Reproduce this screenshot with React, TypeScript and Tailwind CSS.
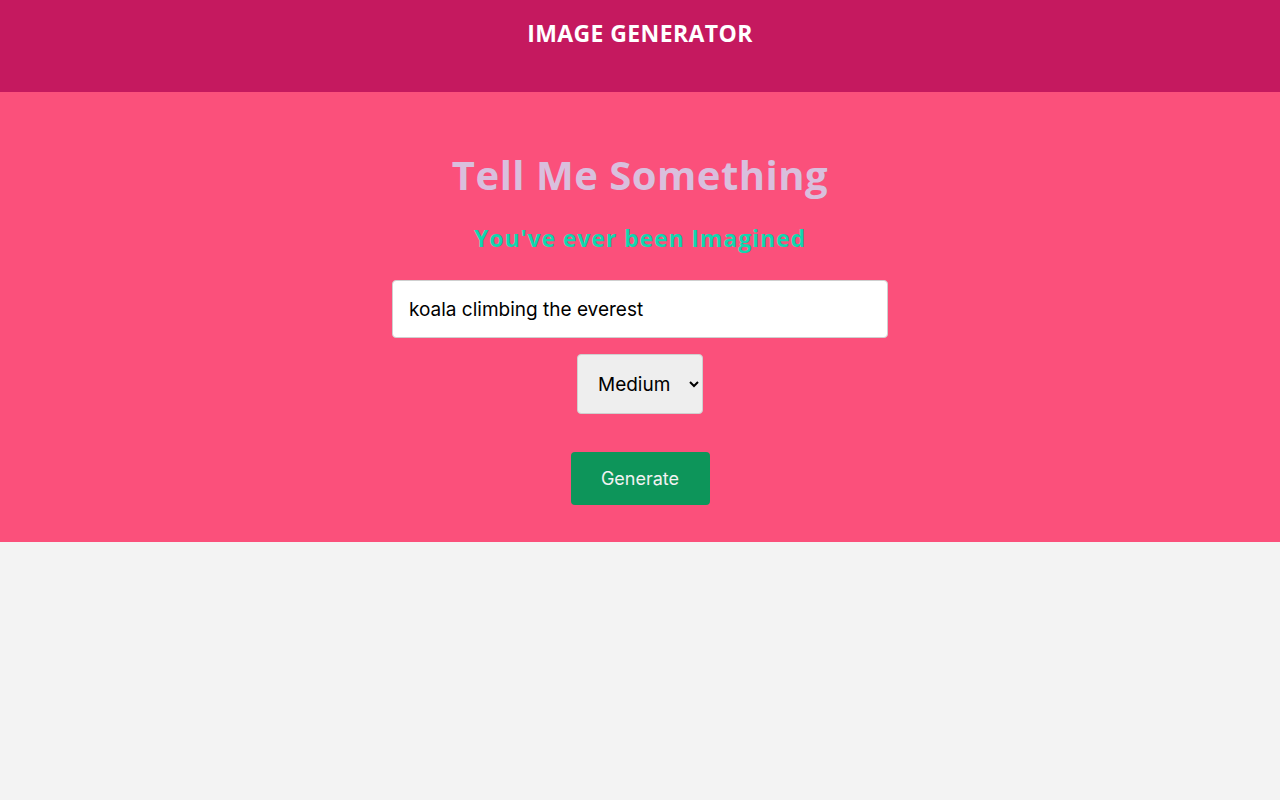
import { useState } from "react";

export default function App() {
  const [prompt, setPrompt] = useState("koala climbing the everest");
  const [size, setSize] = useState("medium");

  return (
    <div className="min-h-screen bg-[#f3f3f3]">
      {/* Header */}
      <header className="h-[92px] bg-[#c5195f] pt-[17px] text-center">
        <h1 className="font-['Open_Sans',sans-serif] text-[23px] font-bold leading-8 tracking-[0.4px] text-white">
          IMAGE GENERATOR
        </h1>
      </header>

      {/* Prompt section */}
      <main className="flex flex-col items-center bg-[#fb507b] pt-[57px] pb-[37px]">
        <h2 className="font-['Open_Sans',sans-serif] text-[40px] font-bold leading-[52px] tracking-[0.5px] text-[#d9bfdd]">
          Tell Me Something
        </h2>
        <h3 className="mt-[21px] font-['Open_Sans',sans-serif] text-[23px] font-bold leading-8 tracking-[0.9px] text-[#12d6af]">
          You've ever been Imagined
        </h3>

        <form
          className="mt-[26px] flex flex-col items-center"
          onSubmit={(e) => e.preventDefault()}
        >
          <input
            type="text"
            value={prompt}
            onChange={(e) => setPrompt(e.target.value)}
            className="h-[58px] w-[496px] rounded-[4px] border border-[#cfcfcf] bg-white px-[16px] font-['Inter',sans-serif] text-[19px] text-black outline-none"
          />
          <select
            value={size}
            onChange={(e) => setSize(e.target.value)}
            className="mt-[16px] h-[60px] w-[126px] rounded-[4px] border border-[#cfcfcf] bg-[#eeeeee] pl-[16px] font-['Inter',sans-serif] text-[19px] text-black"
          >
            <option value="small">Small</option>
            <option value="medium">Medium</option>
            <option value="large">Large</option>
          </select>
          <button
            type="submit"
            className="mt-[38px] h-[53px] w-[139px] rounded-[4px] bg-[#0d955a] font-['Inter',sans-serif] text-[18px] text-[#f2f2f2]"
          >
            Generate
          </button>
        </form>
      </main>
    </div>
  );
}
